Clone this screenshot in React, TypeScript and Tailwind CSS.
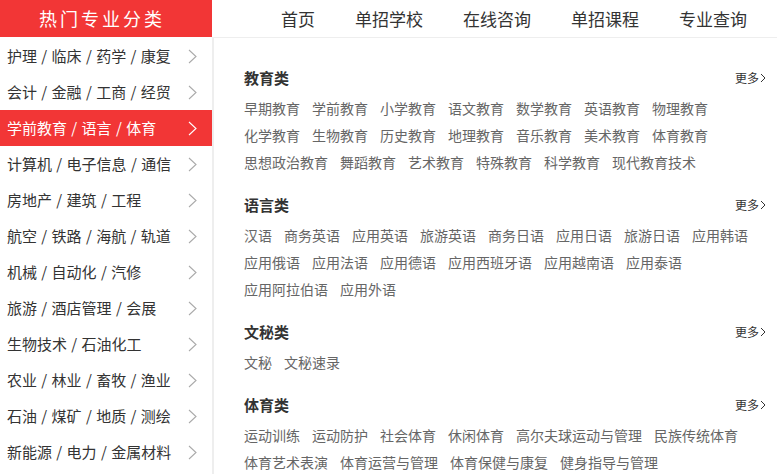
import React from "react";

const font = { fontFamily: '"Noto Sans CJK SC", "Noto Sans", sans-serif' };

const sideItems = [
  "护理 / 临床 / 药学 / 康复",
  "会计 / 金融 / 工商 / 经贸",
  "学前教育 / 语言 / 体育",
  "计算机 / 电子信息 / 通信",
  "房地产 / 建筑 / 工程",
  "航空 / 铁路 / 海航 / 轨道",
  "机械 / 自动化 / 汽修",
  "旅游 / 酒店管理 / 会展",
  "生物技术 / 石油化工",
  "农业 / 林业 / 畜牧 / 渔业",
  "石油 / 煤矿 / 地质 / 测绘",
  "新能源 / 电力 / 金属材料",
];

const nav = ["首页", "单招学校", "在线咨询", "单招课程", "专业查询"];

const sections: { title: string; items: string[] }[] = [
  {
    title: "教育类",
    items: [
      "早期教育", "学前教育", "小学教育", "语文教育", "数学教育", "英语教育", "物理教育",
      "化学教育", "生物教育", "历史教育", "地理教育", "音乐教育", "美术教育", "体育教育",
      "思想政治教育", "舞蹈教育", "艺术教育", "特殊教育", "科学教育", "现代教育技术",
    ],
  },
  {
    title: "语言类",
    items: [
      "汉语", "商务英语", "应用英语", "旅游英语", "商务日语", "应用日语", "旅游日语", "应用韩语",
      "应用俄语", "应用法语", "应用德语", "应用西班牙语", "应用越南语", "应用泰语",
      "应用阿拉伯语", "应用外语",
    ],
  },
  { title: "文秘类", items: ["文秘", "文秘速录"] },
  {
    title: "体育类",
    items: [
      "运动训练", "运动防护", "社会体育", "休闲体育", "高尔夫球运动与管理", "民族传统体育",
      "体育艺术表演", "体育运营与管理", "体育保健与康复", "健身指导与管理",
    ],
  },
];

function Chevron({ color }: { color: string }) {
  return (
    <svg width="9" height="15" viewBox="0 0 9 15" fill="none">
      <polyline points="1,1 8,7.5 1,14" stroke={color} strokeWidth="1.1" />
    </svg>
  );
}

export default function App() {
  return (
    <div className="w-[777px] h-[474px] overflow-hidden bg-white flex flex-col" style={font}>
      <div className="h-[37px] flex shrink-0">
        <div className="w-[212px] bg-[#f23636] text-white text-[18px] tracking-[3px] flex items-center pl-[39px]">
          热门专业分类
        </div>
        <div className="flex-1 flex items-center pl-[69px] gap-[40px] text-[17px] text-[#333]">
          {nav.map((n) => (
            <span key={n}>{n}</span>
          ))}
        </div>
      </div>
      <div className="flex flex-1 min-h-0">
        <div className="w-[212px] shrink-0 pt-[1px]">
          {sideItems.map((s, i) => {
            const active = i === 2;
            return (
              <div
                key={s}
                className={`h-[36px] flex items-center justify-between pl-[7px] pr-[15px] text-[15px] [word-spacing:1px] ${
                  active ? "bg-[#f23636] text-white" : "text-[#333]"
                }`}
              >
                <span>{s}</span>
                <Chevron color={active ? "#ffffff" : "#aaaaaa"} />
              </div>
            );
          })}
        </div>
        <div className="flex-1 border-t border-l-2 border-[#eeeeee] pl-[30px] pr-[11px] pt-[28px]">
          {sections.map((sec, idx) => (
            <div key={sec.title} className={idx > 0 ? "mt-[17px]" : ""}>
              <div className="flex items-center justify-between h-[24px] mb-[5px]">
                <span className="text-[15px] font-bold text-[#333]">{sec.title}</span>
                <span className="flex items-center gap-[1px] text-[12px] text-[#333]">
                  更多
                  <svg width="6" height="10" viewBox="0 0 6 10" fill="none">
                    <polyline points="1,1 5,5 1,9" stroke="#333" strokeWidth="1" />
                  </svg>
                </span>
              </div>
              <div className="flex flex-wrap gap-x-3 text-[14px] leading-[27px] text-[#666]">
                {sec.items.map((it) => (
                  <span key={it}>{it}</span>
                ))}
              </div>
            </div>
          ))}
        </div>
      </div>
    </div>
  );
}
